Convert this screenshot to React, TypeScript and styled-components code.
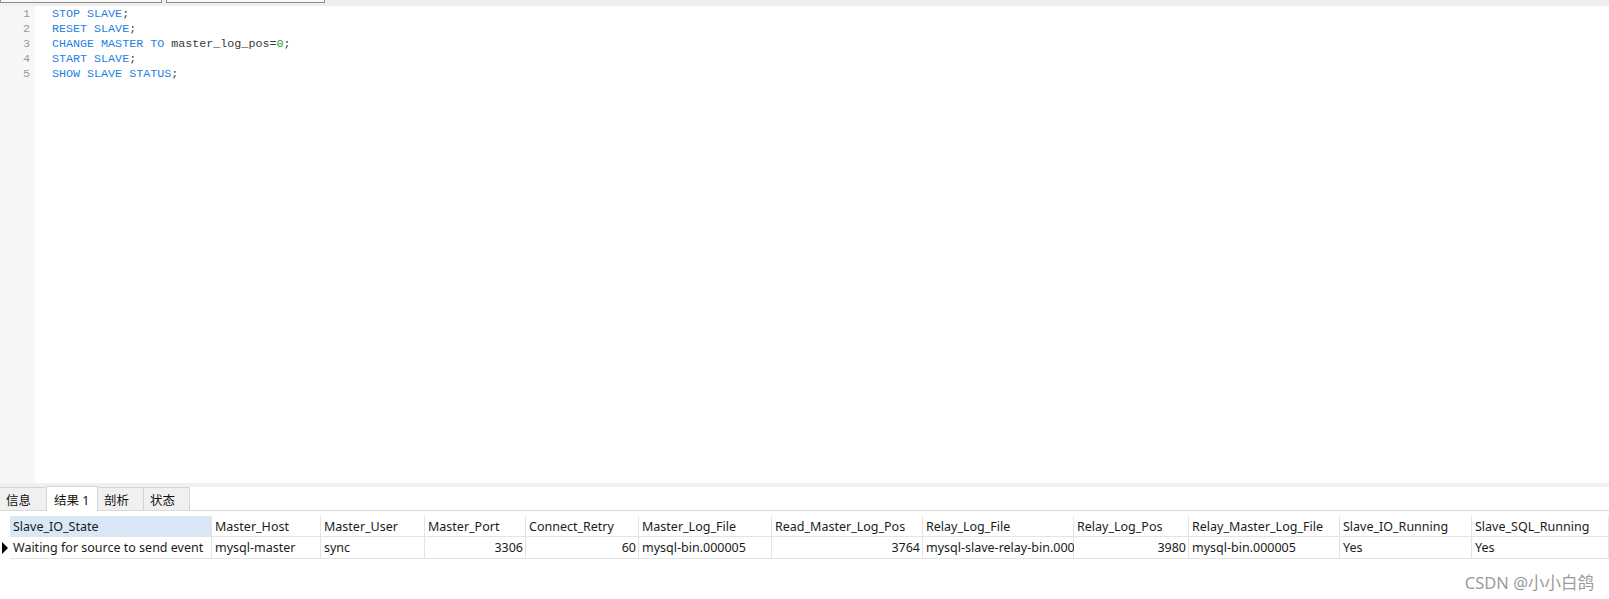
import styled, { createGlobalStyle } from 'styled-components'

const GlobalStyle = createGlobalStyle`
  html, body {
    margin: 0;
    padding: 0;
    background: #ffffff;
    overflow: hidden;
  }
`;

const UI_FONT = `"Noto Sans", "Noto Sans CJK SC", sans-serif`;
const CODE_FONT = `"Liberation Mono", "DejaVu Sans Mono", monospace`;

const columns = [
  { name: 'Slave_IO_State', width: 202, value: 'Waiting for source to send event' },
  { name: 'Master_Host', width: 109, value: 'mysql-master' },
  { name: 'Master_User', width: 104, value: 'sync' },
  { name: 'Master_Port', width: 101, value: '3306', num: true },
  { name: 'Connect_Retry', width: 113, value: '60', num: true },
  { name: 'Master_Log_File', width: 133, value: 'mysql-bin.000005' },
  { name: 'Read_Master_Log_Pos', width: 151, value: '3764', num: true },
  { name: 'Relay_Log_File', width: 151, value: 'mysql-slave-relay-bin.000' },
  { name: 'Relay_Log_Pos', width: 115, value: '3980', num: true },
  { name: 'Relay_Master_Log_File', width: 151, value: 'mysql-bin.000005' },
  { name: 'Slave_IO_Running', width: 132, value: 'Yes' },
  { name: 'Slave_SQL_Running', width: 137, value: 'Yes' },
];

const Page = styled.div`
  position: relative;
  width: 1609px;
  height: 599px;
  display: flex;
  flex-direction: column;
  font-family: ${UI_FONT};
  color: #1b1b1b;
`;

const TopStrip = styled.div`
  height: 6px;
  background: #efefef;
  display: flex;
  gap: 4px;
  flex-shrink: 0;
`;

const StripButton = styled.div<{ $w: number }>`
  width: ${(p) => p.$w}px;
  height: 2px;
  background: #f7f7f7;
  border: 1px solid #8c8c8c;
  border-top: none;
  box-sizing: content-box;
`;

const Editor = styled.div`
  display: flex;
  height: 477px;
  flex-shrink: 0;
`;

const Gutter = styled.div`
  width: 35px;
  background: #f7f7f7;
  padding: 1px 5px 0 0;
  box-sizing: border-box;
  text-align: right;
  font-family: ${CODE_FONT};
  font-size: 11.7px;
  line-height: 15px;
  color: #9a9a9a;
`;

const Code = styled.div`
  flex: 1;
  padding: 1px 0 0 17px;
  font-family: ${CODE_FONT};
  font-size: 11.7px;
  line-height: 15px;
  color: #3a3a3a;
  white-space: pre;
`;

const Kw = styled.span`
  color: #1d7fe6;
`;

const Num = styled.span`
  color: #21a321;
`;

const Separator = styled.div`
  height: 4px;
  background: #f0f0f0;
  flex-shrink: 0;
`;

const TabBar = styled.div`
  display: flex;
  height: 23px;
  border-bottom: 1px solid #dadada;
  flex-shrink: 0;
`;

const Tab = styled.div<{ $w: number; $active?: boolean }>`
  width: ${(p) => p.$w}px;
  box-sizing: border-box;
  display: flex;
  align-items: center;
  padding-left: ${(p) => (p.$active ? 7 : 6)}px;
  font-size: 12.5px;
  color: #111;
  background: ${(p) => (p.$active ? '#ffffff' : '#f0f0f0')};
  border: 1px solid #d4d4d4;
  border-left: none;
  border-bottom: none;
  margin-top: ${(p) => (p.$active ? -1 : 0)}px;
  margin-bottom: ${(p) => (p.$active ? -1 : 0)}px;
`;

const Grid = styled.div`
  margin-top: 5px;
  display: grid;
  grid-template-columns: 10px ${columns.map((c) => `${c.width}px`).join(' ')};
  grid-template-rows: 21px 22px;
  font-size: 12.5px;
`;

const Cell = styled.div<{ $num?: boolean; $selected?: boolean }>`
  box-sizing: border-box;
  display: flex;
  align-items: center;
  justify-content: ${(p) => (p.$num ? 'flex-end' : 'flex-start')};
  padding: 0 2px 0 3px;
  white-space: nowrap;
  border-right: 1px solid #e4e4e4;
  border-bottom: 1px solid #e4e4e4;
  background: ${(p) => (p.$selected ? '#d9e8f6' : '#ffffff')};
`;

const IndicatorCell = styled.div`
  display: flex;
  align-items: center;
  padding-left: 2px;
  border-bottom: 1px solid #ffffff;
`;

const Arrow = styled.div`
  width: 0;
  height: 0;
  border-top: 6px solid transparent;
  border-bottom: 6px solid transparent;
  border-left: 6px solid #000;
`;

const Watermark = styled.div`
  position: absolute;
  right: 15px;
  bottom: 5px;
  font-size: 16.5px;
  color: #9b9b9b;
  font-family: ${UI_FONT};
`;

const codeLines = [
  <><Kw>STOP SLAVE</Kw>;</>,
  <><Kw>RESET SLAVE</Kw>;</>,
  <><Kw>CHANGE MASTER TO</Kw> master_log_pos=<Num>0</Num>;</>,
  <><Kw>START SLAVE</Kw>;</>,
  <><Kw>SHOW SLAVE STATUS</Kw>;</>,
];

export default function App() {
  return (
    <>
      <GlobalStyle />
      <Page>
        <TopStrip>
          <StripButton $w={160} />
          <StripButton $w={157} />
        </TopStrip>
        <Editor>
          <Gutter>
            {codeLines.map((_, i) => (
              <div key={i}>{i + 1}</div>
            ))}
          </Gutter>
          <Code>
            {codeLines.map((line, i) => (
              <div key={i}>{line}</div>
            ))}
          </Code>
        </Editor>
        <Separator />
        <TabBar>
          <Tab $w={47}>信息</Tab>
          <Tab $w={51} $active>结果 1</Tab>
          <Tab $w={46}>剖析</Tab>
          <Tab $w={46}>状态</Tab>
        </TabBar>
        <Grid>
          <IndicatorCell />
          {columns.map((c, i) => (
            <Cell key={c.name} $selected={i === 0}>{c.name}</Cell>
          ))}
          <IndicatorCell>
            <Arrow />
          </IndicatorCell>
          {columns.map((c) => (
            <Cell key={c.name} $num={c.num}>{c.value}</Cell>
          ))}
        </Grid>
        <Watermark>CSDN @小小白鸽</Watermark>
      </Page>
    </>
  );
}
